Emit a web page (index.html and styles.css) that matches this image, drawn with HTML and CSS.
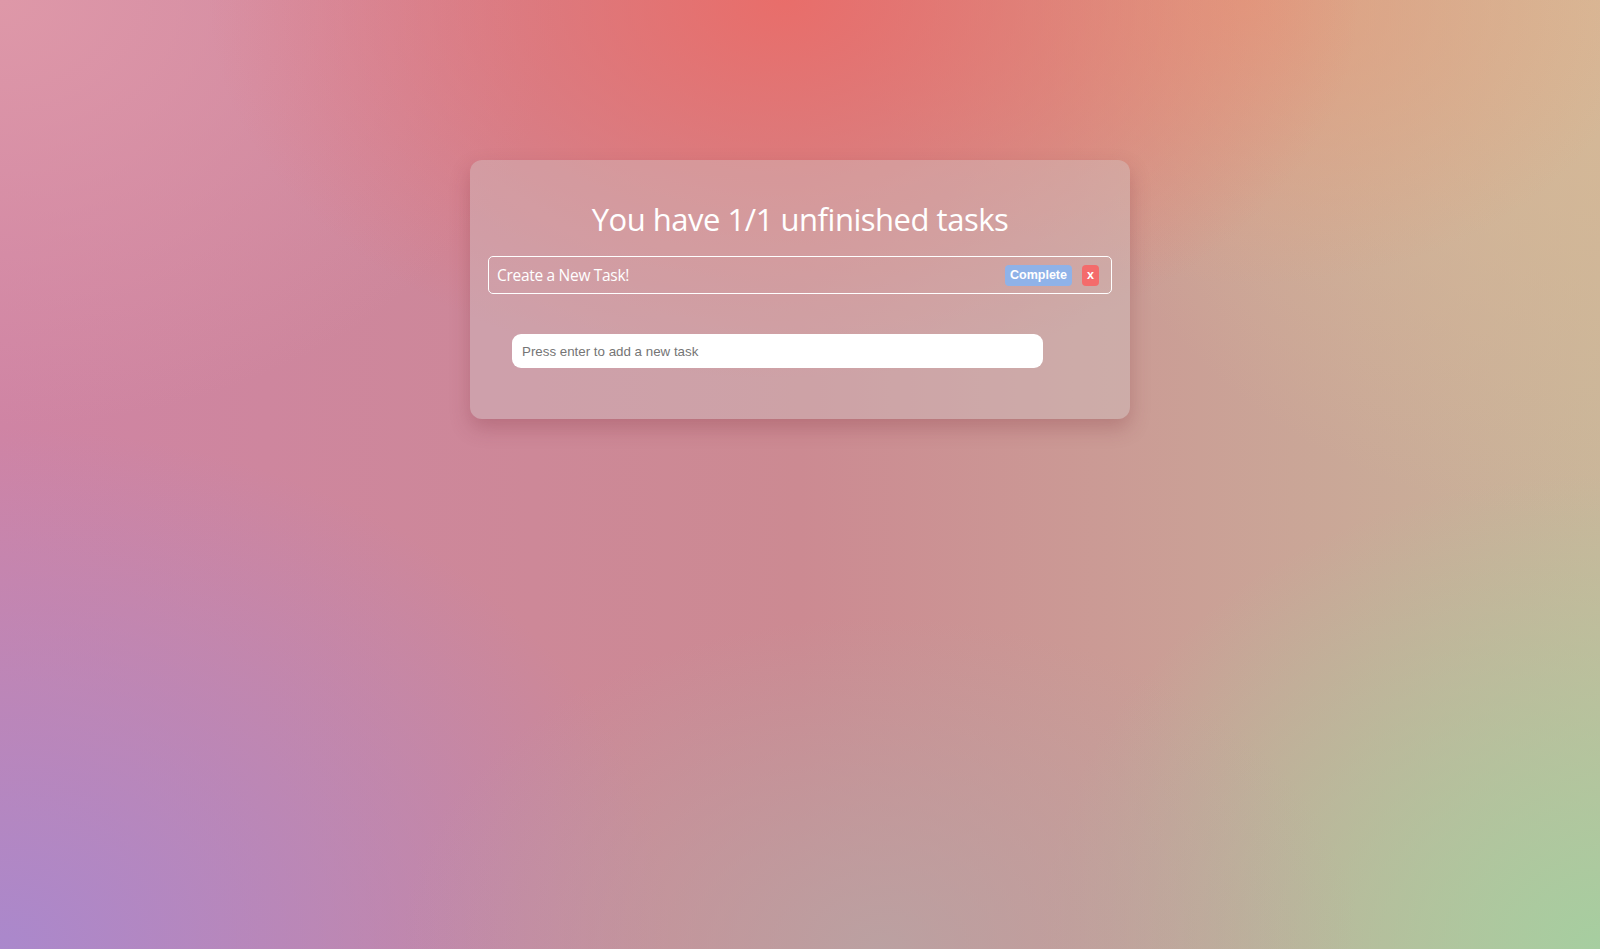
FILE: index.html
```
<!DOCTYPE html>
<html lang="en">
<head>
<meta charset="utf-8">
<title>Tasks</title>
<link rel="stylesheet" href="styles.css">
</head>
<body>
<div class="page">
  <div class="card">
    <h1 class="title">You have 1/1 unfinished tasks</h1>
    <div class="task">
      <span class="task-text">Create a New Task!</span>
      <div class="task-actions">
        <button class="btn btn-complete">Complete</button>
        <button class="btn btn-remove">x</button>
      </div>
    </div>
    <div class="add">
      <input class="add-input" type="text" placeholder="Press enter to add a new task">
    </div>
  </div>
</div>
</body>
</html>
```
FILE: styles.css
```
html, body {
  margin: 0;
  height: 100%;
}

body {
  font-family: "Open Sans", "Noto Sans", sans-serif;
  background:
    radial-gradient(ellipse 36% 40% at 49% 0%, rgba(234,108,104,0.95), rgba(234,108,104,0) 100%),
    radial-gradient(ellipse 25% 30% at 78% 0%, rgba(228,156,124,0.8), rgba(228,156,124,0) 100%),
    radial-gradient(ellipse 35% 55% at 100% 0%, rgba(216,184,150,1), rgba(216,184,150,0) 100%),
    radial-gradient(ellipse 30% 35% at 55% 100%, rgba(184,164,164,0.85), rgba(184,164,164,0) 100%),
    radial-gradient(ellipse 42% 55% at 0% 100%, rgba(170,136,204,1), rgba(170,136,204,0) 100%),
    radial-gradient(ellipse 35% 50% at 100% 100%, rgba(166,206,160,1), rgba(166,206,160,0) 100%),
    radial-gradient(ellipse 35% 45% at 0% 0%, rgba(222,152,168,1), rgba(222,152,168,0) 100%),
    linear-gradient(90deg, #cf84a4 0%, #cc8a92 50%, #c9b69a 100%);
}

.page {
  height: 100%;
  display: flex;
  justify-content: center;
  align-items: flex-start;
  padding-top: 160px;
  box-sizing: border-box;
}

.card {
  width: 660px;
  box-sizing: border-box;
  padding: 38px 18px 51px 18px;
  border-radius: 12px;
  background: rgba(208, 198, 198, 0.4);
  box-shadow: 0 9px 20px rgba(120, 40, 50, 0.26);
}

.title {
  margin: 0;
  font-size: 31px;
  line-height: 42px;
  font-weight: 400;
  color: #fff;
  text-align: center;
  letter-spacing: -0.48px;
}

.task {
  margin-top: 16px;
  height: 38px;
  box-sizing: border-box;
  border: 1px solid #fff;
  border-radius: 5px;
  padding: 0 12px 0 8px;
  display: flex;
  align-items: center;
  justify-content: space-between;
}

.task-text {
  color: #fff;
  font-size: 15.5px;
  letter-spacing: -0.3px;
}

.task-actions {
  display: flex;
  gap: 10px;
  align-items: center;
}

.btn {
  border: none;
  color: #fff;
  font-family: "Liberation Sans", Arial, sans-serif;
  font-weight: 700;
  font-size: 12.5px;
  height: 21px;
  border-radius: 4px;
  padding: 0 5px;
  line-height: 21px;
}

.btn-complete {
  background: #8fb2e8;
  width: 67px;
}

.btn-remove {
  background: #f46b6b;
  width: 17px;
  padding: 0;
}

.add {
  margin-top: 40px;
  padding-left: 24px;
}

.add-input {
  display: block;
  width: 531px;
  height: 34px;
  box-sizing: border-box;
  border: none;
  border-radius: 9px;
  padding: 0 10px;
  background: #fff;
  font-family: "Liberation Sans", Arial, sans-serif;
  font-size: 13.333px;
  outline: none;
}

.add-input::placeholder {
  color: #757575;
}
```
